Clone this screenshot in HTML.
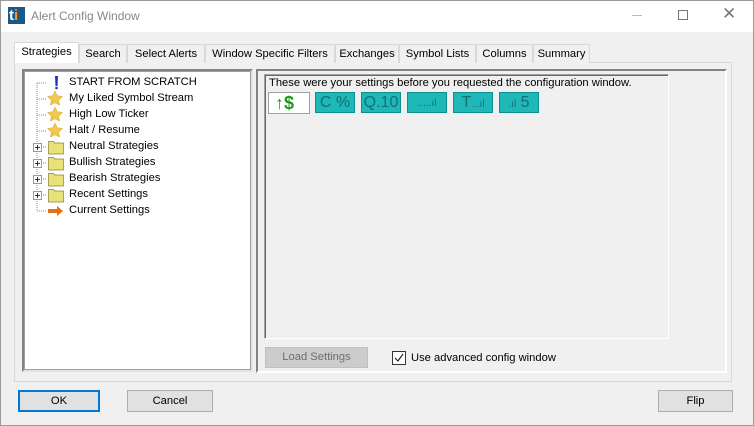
<!DOCTYPE html>
<html><head><style>
*{box-sizing:border-box;margin:0;padding:0}
body{width:754px;height:426px;background:#f0f0f0;font-family:"Liberation Sans",sans-serif;font-size:11.2px;color:#000;position:relative;overflow:hidden}
.a{position:absolute}
.win{left:0;top:0;width:754px;height:426px;border:1px solid #9a9a9a}
.title{left:1px;top:1px;width:752px;height:31px;background:#fff}
.tab{top:44px;height:19px;border:1px solid #d9d9d9;border-bottom:none;background:#f0f0f0;padding:3px 0 0 0;text-align:center;white-space:nowrap}
.btn{border:1px solid #adadad;background:#e1e1e1;text-align:center;line-height:19px}
.tree div{position:absolute;left:46px;white-space:nowrap}
.tb{top:92px;height:21px;background:#1fb8b8;border:1px solid #0e8f8f;color:#137070;font-size:16px;line-height:19px;text-align:center}
</style></head><body>
<div class="a win"></div>
<div class="a title"></div>
<div class="a" style="left:8px;top:7px;width:17px;height:17px;background:#1a5a8a;color:#fff;font-weight:bold;font-size:15px;line-height:17px;padding-left:1px">t<span style="color:#f39a1d">i</span></div>
<div class="a" style="left:31px;top:9px;color:#888;font-size:12px">Alert Config Window</div>
<div class="a" style="left:632px;top:15px;width:10px;height:1px;background:#bbb"></div>
<div class="a" style="left:678px;top:10px;width:10px;height:10px;border:1px solid #777"></div>
<div class="a" style="left:722px;top:4px;font-size:17px;color:#777">✕</div>

<div class="a" style="left:14px;top:62px;width:718px;height:320px;border:1px solid #d9d9d9;background:#f0f0f0"></div>
<div class="a tab" style="left:14px;top:42px;height:21px;width:65px;background:#fff;padding-top:3px">Strategies</div>
<div class="a tab" style="left:79px;width:48px">Search</div>
<div class="a tab" style="left:127px;width:78px">Select Alerts</div>
<div class="a tab" style="left:205px;width:130px">Window Specific Filters</div>
<div class="a tab" style="left:335px;width:64px">Exchanges</div>
<div class="a tab" style="left:399px;width:77px">Symbol Lists</div>
<div class="a tab" style="left:476px;width:57px">Columns</div>
<div class="a tab" style="left:533px;width:57px">Summary</div>

<div class="a" style="left:22px;top:69px;width:231px;height:303px;border:2px solid #838383;border-right-color:#e3e3e3;border-bottom-color:#e3e3e3;background:#fff"></div>
<div class="a" style="left:24px;top:71px;width:227px;height:299px;border:1px solid #a0a0a0;background:#fff"></div>
<div class="a tree" style="left:23px;top:76px;width:228px;height:150px">
<svg class="a" style="left:0;top:0" width="46" height="150">
<g stroke="#888" stroke-dasharray="1,1" fill="none">
<path d="M14 7V135M14 7H24M14 23H24M14 39H24M14 55H24M14 71H24M14 87H24M14 103H24M14 119H24M14 135H24"/></g>
<g fill="#fff" stroke="#999"><rect x="10.5" y="67.5" width="8" height="8"/><rect x="10.5" y="83.5" width="8" height="8"/><rect x="10.5" y="99.5" width="8" height="8"/><rect x="10.5" y="115.5" width="8" height="8"/></g>
<g stroke="#333"><path d="M12 71.5h5M14.5 69v5M12 87.5h5M14.5 85v5M12 103.5h5M14.5 101v5M12 119.5h5M14.5 117v5"/></g>
<path d="M32 0h3l-0.5 10h-2z" fill="#1a2fd0"/><circle cx="33.5" cy="12" r="1.3" fill="#1a2fd0"/>
<g fill="#f0c850" stroke="#d8a830" stroke-width=".5"><path d="M32 15l2.3 4.7 5.2.8-3.8 3.6.9 5.1-4.6-2.4-4.6 2.4.9-5.1-3.8-3.6 5.2-.8z"/><path d="M32 31l2.3 4.7 5.2.8-3.8 3.6.9 5.1-4.6-2.4-4.6 2.4.9-5.1-3.8-3.6 5.2-.8z"/><path d="M32 47l2.3 4.7 5.2.8-3.8 3.6.9 5.1-4.6-2.4-4.6 2.4.9-5.1-3.8-3.6 5.2-.8z"/></g>
<g fill="#e8e27a" stroke="#8a8030" stroke-width=".7"><path d="M25.5 65.5h5l1 1.5h9v11h-15z"/><path d="M25.5 81.5h5l1 1.5h9v11h-15z"/><path d="M25.5 97.5h5l1 1.5h9v11h-15z"/><path d="M25.5 113.5h5l1 1.5h9v11h-15z"/></g>
<path d="M25 133h9v-3l6 5-6 5v-3h-9z" fill="#e86e10"/>
</svg>
<div style="top:0">START FROM SCRATCH</div>
<div style="top:16px">My Liked Symbol Stream</div>
<div style="top:32px">High Low Ticker</div>
<div style="top:48px">Halt / Resume</div>
<div style="top:64px">Neutral Strategies</div>
<div style="top:80px">Bullish Strategies</div>
<div style="top:96px">Bearish Strategies</div>
<div style="top:112px">Recent Settings</div>
<div style="top:128px">Current Settings</div>
</div>

<div class="a" style="left:256px;top:69px;width:471px;height:304px;border:2px solid #838383;border-right-color:#fff;border-bottom-color:#fff"></div>
<div class="a" style="left:264px;top:74px;width:405px;height:265px;border:1px solid #a0a0a0;border-right-color:#fff;border-bottom-color:#fff;box-shadow:inset 1px 1px 0 #696969"></div>
<div class="a" style="left:269px;top:77px">These were your settings before you requested the configuration window.</div>
<div class="a" style="left:268px;top:92px;width:42px;height:22px;background:#fff;border:1px solid #a0a0a0;color:#1a9a1a;font-weight:bold;font-size:18px;line-height:20px;padding-left:6px">↑$</div>
<div class="a tb" style="left:315px;width:40px">C %</div>
<div class="a tb" style="left:361px;width:40px">Q.10</div>
<div class="a tb" style="left:407px;width:40px;font-size:10px;line-height:22px">.....ıl</div>
<div class="a tb" style="left:453px;width:40px">T<span style="font-size:10px">...ıl</span></div>
<div class="a tb" style="left:499px;width:40px"><span style="font-size:10px">.ıl</span> 5</div>

<div class="a" style="left:265px;top:347px;width:103px;height:21px;background:#ccc;border:1px solid #bfbfbf;color:#6d6d6d;text-align:center;line-height:19px">Load Settings</div>
<div class="a" style="left:392px;top:351px;width:14px;height:14px;border:1px solid #333;background:#fff"></div>
<svg class="a" style="left:392px;top:351px" width="14" height="14"><path d="M3 7l3 3 5-7" stroke="#222" fill="none" stroke-width="1.2"/></svg>
<div class="a" style="left:411px;top:352px">Use advanced config window</div>

<div class="a btn" style="left:18px;top:390px;width:82px;height:22px;border:2px solid #0078d7;line-height:18px">OK</div>
<div class="a btn" style="left:127px;top:390px;width:86px;height:22px;line-height:20px">Cancel</div>
<div class="a btn" style="left:658px;top:390px;width:75px;height:22px;line-height:20px">Flip</div>
</body></html>
